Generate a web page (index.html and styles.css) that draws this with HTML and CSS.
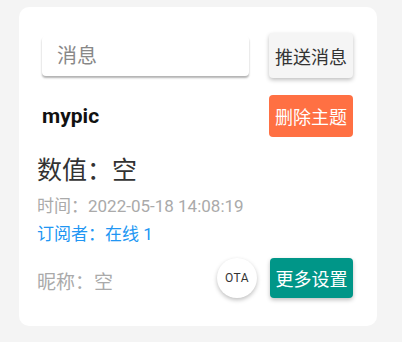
FILE: index.html
```html
<!DOCTYPE html>
<html>

<head>
    <title>mypic</title>
    <link rel="stylesheet" href="styles.css">
</head>

<body>
    <div class="card">
        <div class="row send-row">
            <input class="msg-input" placeholder="消息" />
            <button class="btn btn-light">推送消息</button>
        </div>
        <div class="row topic-row">
            <span class="topic-name">mypic</span>
            <button class="btn btn-orange">删除主题</button>
        </div>
        <div class="value">数值：空</div>
        <div class="time">时间：2022-05-18 14:08:19</div>
        <div class="subs">订阅者：在线 1</div>
        <div class="row bottom-row">
            <span class="nick">昵称：空</span>
            <div class="actions">
                <button class="ota">OTA</button>
                <button class="btn btn-teal">更多设置</button>
            </div>
        </div>
    </div>
</body>

</html>
```

FILE: styles.css
```css
body {
    margin: 0;
    padding: 7px 25px 17px 19px;
    background: #f4f4f4;
    font-family: Roboto, "Noto Sans CJK SC", sans-serif;
}

.card {
    background: #fff;
    border-radius: 10px;
    padding: 26px 24px 28px 18px;
}

.row {
    display: flex;
    align-items: center;
    justify-content: space-between;
}

.send-row {
    height: 45px;
}

.msg-input {
    margin-left: 5px;
    width: 207px;
    height: 40px;
    box-sizing: border-box;
    border: none;
    border-radius: 4px;
    padding: 0 15px;
    font-family: inherit;
    font-size: 20px;
    color: #333;
    box-shadow: 0 2px 2px rgba(0, 0, 0, 0.3);
    outline: none;
}

.msg-input::placeholder {
    color: #888;
}

.btn {
    border: none;
    border-radius: 4px;
    padding: 0 5px;
    width: 84px;
    font-family: inherit;
    font-size: 18px;
    box-shadow: 0 2px 4px rgba(0, 0, 0, 0.25);
}

.btn-light {
    height: 45px;
    background: #f5f5f5;
    color: #333;
}

.topic-row {
    margin-top: 17px;
    height: 42px;
}

.topic-name {
    margin-left: 5px;
    font-size: 21px;
    font-weight: bold;
    color: #111;
}

.btn-orange {
    height: 42px;
    background: #ff7043;
    color: #fff;
    box-shadow: none;
}

.value {
    margin-top: 19px;
    font-size: 25px;
    line-height: 30px;
    color: #333;
}

.time {
    margin-top: 6px;
    font-size: 17px;
    line-height: 28px;
    color: #aaa;
}

.subs {
    font-size: 17px;
    line-height: 28px;
    color: #2196f3;
}

.bottom-row {
    margin-top: 10px;
    height: 40px;
}

.nick {
    font-size: 19px;
    color: #aaa;
    padding-top: 5px;
}

.actions {
    display: flex;
    align-items: center;
    gap: 13px;
}

.ota {
    width: 40px;
    height: 40px;
    border: none;
    border-radius: 50%;
    background: #fff;
    padding: 0;
    font-family: inherit;
    font-size: 12px;
    letter-spacing: 0.5px;
    color: #333;
    box-shadow: 0 2px 4px rgba(0, 0, 0, 0.25);
}

.btn-teal {
    width: 83px;
    height: 40px;
    background: #009688;
    color: #fff;
}
```
